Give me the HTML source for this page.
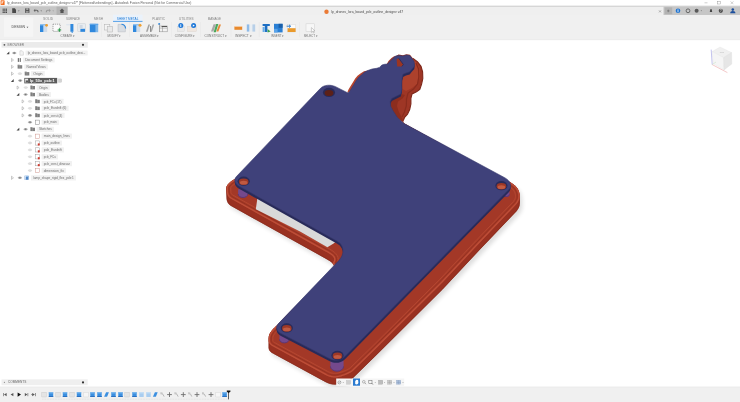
<!DOCTYPE html>
<html><head><meta charset="utf-8"><title>Fusion</title>
<style>
html,body{margin:0;padding:0;background:#fff;overflow:hidden}
body{width:740px;height:402px;font-family:"Liberation Sans",sans-serif}
svg{display:block;position:absolute;left:0;top:0}
#ui{filter:blur(0.3px)}
#model{filter:blur(0.35px)}
text{font-family:"Liberation Sans",sans-serif}
</style></head><body>
<svg width="740" height="402" viewBox="0 0 740 402">

<rect x="0" y="0" width="740" height="402" fill="#ffffff"/>
<rect x="0" y="5.8" width="740" height="9.2" fill="#efefef"/>
<rect x="0" y="5.7" width="740" height="1.1" fill="#d0d0d0"/>
<rect x="0" y="6.6" width="67.5" height="8.4" fill="#c6c6c6"/>
<rect x="56.5" y="6.6" width="11" height="8.4" fill="#b4b4b4"/>
<rect x="663.5" y="6.6" width="76.5" height="8.4" fill="#c6c6c6"/>
<rect x="664.6" y="7.4" width="7.6" height="6.8" fill="#b2b2b2"/>
<rect x="0" y="15" width="740" height="24.8" fill="#f0f0f0"/>
<rect x="0" y="39.6" width="740" height="0.5" fill="#e2e2e2"/>
<rect x="0" y="387" width="740" height="15" fill="#f0f0f0"/>
<rect x="0" y="386.7" width="740" height="0.5" fill="#e0e0e0"/>
<defs><clipPath id="cv"><rect x="0" y="40" width="740" height="346.8"/></clipPath></defs><g clip-path="url(#cv)">
<g id="model">
<path d="M236,178.5 C230,181.5 226.2,185 226.2,189 L226.7,199 C227,202 228.2,203.8 230.5,205.6 L325,258.2 C334,263.2 337,265.5 331,272 L290,312 L277,325.5 C271.5,330 268.7,334 268.7,338.5 L268.7,348 C269,350.8 270.5,352.2 273.2,353.6 L325.5,382.0 C330,384.5 334.5,385.2 340,383.8 C345,382.3 349.5,380.8 353.2,377.8 L375,356.5 L442.5,289.5 L479.5,250 L516.5,211.2 C518.6,208.5 519.6,206.5 519.8,203 L519.8,198.6 C519.9,193 518.7,189.6 515.5,186 L511.4,182.9 L404.2,123.6 L330,100 Z" fill="#000" opacity="0.13" transform="translate(2.5,3.5)" style="filter:blur(2.2px)"/>
<path d="M236,178.5 C230,181.5 226.2,185 226.2,189 L226.7,199 C227,202 228.2,203.8 230.5,205.6 L325,258.2 C334,263.2 337,265.5 331,272 L290,312 L277,325.5 C271.5,330 268.7,334 268.7,338.5 L268.7,348 C269,350.8 270.5,352.2 273.2,353.6 L325.5,382.0 C330,384.5 334.5,385.2 340,383.8 C345,382.3 349.5,380.8 353.2,377.8 L375,356.5 L442.5,289.5 L479.5,250 L516.5,211.2 C518.6,208.5 519.6,206.5 519.8,203 L519.8,198.6 C519.9,193 518.7,189.6 515.5,186 L511.4,182.9 L404.2,123.6 L330,100 Z" fill="#993121"/>
<path d="M236.2,178.7 L236.2,178.7 L236.1,178.8 L234.7,179.5 L233.3,180.3 L232.1,181.1 L231.0,181.9 L230.0,182.7 L229.1,183.6 L228.3,184.4 L227.7,185.3 L227.2,186.2 L226.8,187.1 L226.6,188.1 L226.5,189.0 L227.0,199.0 L227.1,199.7 L227.2,200.3 L227.4,201.0 L227.6,201.5 L227.8,202.1 L228.1,202.6 L228.4,203.1 L228.8,203.6 L229.2,204.0 L229.6,204.5 L230.1,204.9 L230.7,205.4 L325.1,257.9 L325.1,257.9 L327.3,259.1 L327.3,259.1 L329.1,260.2 L329.2,260.3 L330.7,261.3 L330.8,261.3 L332.1,262.3 L332.1,262.3 L333.1,263.3 L333.1,263.3 L333.2,263.4 L333.9,264.4 L333.9,264.4 L333.9,264.4 L333.9,264.4 L334.3,265.5 L334.3,265.5 L334.3,265.5 L334.3,265.5 L334.4,266.6 L334.4,266.7 L334.4,266.7 L334.4,266.7 L334.2,267.9 L334.1,267.9 L334.1,267.9 L333.5,269.2 L333.5,269.2 L333.5,269.2 L332.6,270.6 L332.5,270.7 L331.2,272.2 L331.2,272.2 L290.2,312.2 L277.2,325.7 L277.2,325.7 L275.9,326.8 L274.7,327.9 L273.6,329.0 L272.6,330.1 L271.8,331.1 L271.0,332.2 L270.4,333.2 L269.9,334.2 L269.5,335.3 L269.2,336.3 L269.1,337.4 L269.0,338.5 L269.0,348.0 L269.1,348.6 L269.2,349.2 L269.4,349.7 L269.7,350.2 L269.9,350.7 L270.3,351.1 L270.7,351.5 L271.1,351.9 L271.6,352.3 L272.1,352.6 L272.7,353.0 L273.3,353.3 L273.3,353.3 L325.6,381.7 L326.8,382.3 L327.9,382.8 L329.0,383.2 L330.1,383.6 L331.3,383.9 L332.4,384.1 L333.6,384.2 L334.8,384.2 L336.0,384.2 L337.3,384.0 L338.6,383.8 L339.9,383.5 L341.2,383.1 L342.4,382.8 L343.6,382.4 L344.7,382.0 L345.9,381.5 L347.0,381.1 L348.1,380.6 L349.1,380.1 L350.1,379.5 L351.1,378.9 L352.1,378.3 L353.0,377.6 L374.8,356.3 L442.3,289.3 L479.3,249.8 L479.3,249.8 L516.3,211.0 L516.8,210.4 L517.2,209.7 L517.6,209.1 L518.0,208.5 L518.3,207.9 L518.6,207.3 L518.8,206.7 L519.0,206.0 L519.2,205.3 L519.3,204.6 L519.4,203.8 L519.5,203.0 L519.5,198.6 L519.5,197.3 L519.4,196.0 L519.3,194.8 L519.1,193.7 L518.9,192.6 L518.6,191.6 L518.2,190.7 L517.8,189.8 L517.3,188.9 L516.7,188.0 L516.0,187.1 L515.3,186.2 L511.2,183.2 L404.1,123.9 L330.1,100.3 L236.2,178.7 Z" fill="none" stroke="#86291b" stroke-width="0.7"/>
<path d="M234.5,179.3 L233.2,180.0 L231.9,180.8 L230.8,181.7 L229.8,182.5 L228.8,183.4 L228.1,184.3 L227.4,185.2 L226.9,186.1 L226.5,187.0 L226.5,187.2 L226.7,192.0 L226.8,192.7 L226.9,193.4 L227.1,194.0 L227.3,194.6 L227.6,195.2 L227.8,195.8 L228.2,196.3 L228.6,196.8 L229.0,197.2 L229.4,197.7 L229.9,198.1 L230.5,198.6 L325.0,251.2 L327.1,252.4 L329.0,253.5 L330.6,254.6 L331.9,255.6 L332.9,256.5 L333.6,257.5 L334.0,258.6 L334.1,259.6 L333.9,260.8 L333.3,262.1 L332.5,263.2 L332.9,263.5 L333.6,264.5 L334.0,265.6 L334.1,266.6 L333.9,267.8 L333.3,269.1 L332.3,270.5 L331.0,272.0 L290.0,312.0 L277.0,325.5 L275.7,326.6 L274.5,327.7 L273.4,328.8 L272.4,329.9 L271.5,330.9 L270.8,332.0 L270.2,333.1 L269.6,334.1 L269.2,335.2 L268.9,336.3 L268.8,337.4 L268.7,338.5 L268.7,341.0 L268.8,341.7 L269.0,342.3 L269.2,342.9 L269.4,343.4 L269.7,343.9 L270.1,344.3 L270.5,344.7 L270.9,345.1 L271.4,345.5 L272.0,345.9 L272.6,346.2 L273.2,346.6 L325.5,375.0 L326.6,375.6 L327.8,376.1 L328.9,376.5 L330.0,376.9 L331.2,377.2 L332.4,377.4 L333.6,377.5 L334.8,377.5 L336.0,377.5 L337.3,377.3 L338.6,377.1 L340.0,376.8 L341.2,376.4 L342.5,376.0 L343.7,375.7 L344.8,375.2 L346.0,374.8 L347.1,374.4 L348.2,373.9 L349.2,373.4 L350.3,372.8 L351.3,372.2 L352.3,371.5 L353.2,370.8 L375.0,349.5 L442.5,282.5 L479.5,243.0 L516.5,204.2 L517.0,203.5 L517.5,202.9 L517.9,202.3 L518.2,201.7 L518.6,201.0 L518.9,200.4 L519.1,199.8 L519.3,199.1 L519.5,198.4 L519.6,197.6 L519.7,196.8 L519.8,196.5 L519.7,196.0 L519.6,194.8 L519.4,193.6 L519.2,192.6 L518.9,191.6 L518.5,190.6 L518.1,189.6 L517.5,188.7 L516.9,187.8 L516.3,186.9 L515.5,186.0 L511.4,182.9 L404.2,123.6 L330.0,100.0 L236.0,178.5 L234.5,179.3 Z" fill="#a83b28"/>
<path d="M234.9,179.9 L233.6,180.6 L232.3,181.4 L231.2,182.2 L230.2,183.0 L229.4,183.9 L228.6,184.7 L228.0,185.5 L227.5,186.4 L227.2,187.3 L227.2,187.3 L227.4,191.9 L227.5,192.6 L227.6,193.2 L227.8,193.8 L228.0,194.4 L228.2,194.9 L228.5,195.4 L228.8,195.9 L229.1,196.3 L229.5,196.8 L229.9,197.2 L230.4,197.6 L230.9,198.0 L325.3,250.6 L325.3,250.6 L327.5,251.8 L327.5,251.8 L329.3,252.9 L329.4,252.9 L331.0,254.0 L331.0,254.0 L332.3,255.0 L332.4,255.1 L333.4,256.0 L333.4,256.1 L333.5,256.1 L334.2,257.1 L334.2,257.2 L334.3,257.2 L334.3,257.3 L334.7,258.3 L334.7,258.4 L334.7,258.4 L334.7,258.5 L334.8,259.6 L334.8,259.7 L334.8,259.7 L334.8,259.8 L334.5,261.0 L334.5,261.0 L334.5,261.1 L333.9,262.4 L333.9,262.4 L333.8,262.5 L333.4,263.1 L333.4,263.1 L333.5,263.1 L334.2,264.1 L334.2,264.2 L334.3,264.2 L334.3,264.3 L334.7,265.3 L334.7,265.4 L334.7,265.4 L334.7,265.5 L334.8,266.6 L334.8,266.7 L334.8,266.7 L334.8,266.8 L334.5,268.0 L334.5,268.0 L334.5,268.1 L333.9,269.4 L333.9,269.4 L333.8,269.5 L332.9,270.9 L332.8,270.9 L331.5,272.5 L331.5,272.5 L290.5,312.5 L277.5,326.0 L277.5,326.0 L276.1,327.1 L275.0,328.2 L273.9,329.3 L272.9,330.3 L272.1,331.4 L271.4,332.4 L270.8,333.4 L270.3,334.4 L269.9,335.4 L269.6,336.4 L269.5,337.5 L269.4,338.5 L269.4,340.9 L269.5,341.5 L269.6,342.1 L269.8,342.6 L270.0,343.1 L270.3,343.5 L270.6,343.9 L270.9,344.2 L271.3,344.6 L271.8,345.0 L272.3,345.3 L272.9,345.6 L273.5,346.0 L273.5,346.0 L325.8,374.4 L326.9,375.0 L328.0,375.5 L329.1,375.9 L330.2,376.2 L331.3,376.5 L332.5,376.7 L333.6,376.8 L334.8,376.8 L336.0,376.8 L337.2,376.6 L338.5,376.4 L339.8,376.1 L341.0,375.8 L342.2,375.4 L343.4,375.0 L344.6,374.6 L345.7,374.2 L346.8,373.7 L347.9,373.2 L348.9,372.7 L349.9,372.2 L350.9,371.6 L351.8,371.0 L352.7,370.3 L374.5,349.0 L442.0,282.0 L479.0,242.5 L479.0,242.5 L516.0,203.7 L516.4,203.1 L516.9,202.5 L517.3,201.9 L517.6,201.3 L517.9,200.7 L518.2,200.1 L518.5,199.5 L518.6,198.9 L518.8,198.2 L518.9,197.5 L519.0,196.8 L519.1,196.5 L519.0,196.0 L518.9,194.9 L518.8,193.8 L518.5,192.8 L518.2,191.8 L517.9,190.8 L517.4,189.9 L516.9,189.1 L516.4,188.2 L515.7,187.3 L515.0,186.5 L511.0,183.5 L403.9,124.2 L330.2,100.8 L236.4,179.0 L236.4,179.1 L236.3,179.1 L234.9,179.9 Z" fill="none" stroke="#bd4e38" stroke-width="1.3"/>
<path d="M229.0,187.6 L229.2,191.8 L229.3,192.3 L229.4,192.8 L229.5,193.3 L229.6,193.7 L229.8,194.1 L230.0,194.5 L230.2,194.8 L230.5,195.2 L230.8,195.5 L231.2,195.9 L231.6,196.2 L231.9,196.5 L326.2,249.0 L326.2,249.0 L328.4,250.2 L328.4,250.2 L330.3,251.4 L330.4,251.4 L331.9,252.5 L332.1,252.6 L333.4,253.6 L333.6,253.8 L334.6,254.7 L334.8,254.9 L334.9,255.1 L335.7,256.1 L335.8,256.2 L335.9,256.4 L336.0,256.6 L336.4,257.6 L336.4,257.9 L336.5,258.1 L336.5,258.4 L336.6,259.5 L336.6,259.7 L336.6,259.9 L336.6,260.2 L336.3,261.3 L336.2,261.6 L336.1,261.9 L335.6,263.0 L335.7,263.1 L335.8,263.2 L335.9,263.4 L336.0,263.6 L336.4,264.6 L336.4,264.9 L336.5,265.1 L336.5,265.4 L336.6,266.5 L336.6,266.7 L336.6,266.9 L336.6,267.2 L336.3,268.3 L336.2,268.6 L336.1,268.9 L335.5,270.1 L335.4,270.3 L335.3,270.5 L334.4,271.9 L334.2,272.1 L332.9,273.6 L332.7,273.8 L291.8,313.8 L278.8,327.2 L278.6,327.4 L277.3,328.5 L276.2,329.5 L275.2,330.5 L274.3,331.5 L273.5,332.4 L272.9,333.4 L272.4,334.3 L271.9,335.1 L271.6,336.0 L271.4,336.8 L271.2,337.6 L271.2,338.6 L271.2,340.8 L271.3,341.2 L271.4,341.6 L271.5,341.9 L271.6,342.2 L271.8,342.4 L272.0,342.7 L272.2,343.0 L272.5,343.2 L272.8,343.5 L273.3,343.8 L273.8,344.1 L274.4,344.4 L274.4,344.4 L326.7,372.8 L327.7,373.3 L328.7,373.8 L329.7,374.2 L330.7,374.5 L331.7,374.7 L332.7,374.9 L333.7,375.0 L334.8,375.0 L335.9,375.0 L337.0,374.8 L338.2,374.7 L339.4,374.4 L340.5,374.0 L341.7,373.7 L342.9,373.3 L344.0,372.9 L345.1,372.5 L346.1,372.1 L347.1,371.6 L348.1,371.1 L349.0,370.6 L349.9,370.1 L350.8,369.5 L351.6,368.9 L373.2,347.7 L440.7,280.8 L477.7,241.3 L477.7,241.3 L514.6,202.6 L515.0,202.1 L515.4,201.5 L515.8,200.9 L516.1,200.4 L516.3,199.9 L516.6,199.4 L516.8,198.9 L516.9,198.4 L517.0,197.9 L517.2,197.2 L517.2,196.6 L517.3,196.4 L517.2,196.2 L517.1,195.1 L517.0,194.1 L516.8,193.2 L516.5,192.4 L516.2,191.6 L515.8,190.8 L515.4,190.0 L514.9,189.2 L514.3,188.5 L513.8,187.8 L510.0,185.0 L403.2,125.9 L330.5,102.8 L237.6,180.4 L237.4,180.6 L237.2,180.7 L235.8,181.5 L234.5,182.2 L233.3,182.9 L232.3,183.7 L231.4,184.4 L230.6,185.1 L230.0,185.8 L229.5,186.5 L229.1,187.2 L229.0,187.6 Z" fill="none" stroke="#8f2f1f" stroke-width="0.8"/>
<path d="M230.7,187.9 L230.9,191.6 L230.9,192.1 L231.0,192.5 L231.1,192.8 L231.2,193.1 L231.3,193.4 L231.5,193.6 L231.6,193.8 L231.8,194.1 L232.0,194.4 L232.3,194.6 L232.7,195.0 L232.9,195.1 L327.0,247.5 L327.1,247.5 L329.2,248.7 L329.3,248.8 L331.1,249.9 L331.3,250.0 L332.9,251.0 L333.1,251.2 L334.4,252.2 L334.8,252.5 L335.8,253.5 L336.1,253.8 L336.3,254.1 L337.0,255.1 L337.2,255.4 L337.4,255.7 L337.5,256.0 L337.9,257.0 L338.1,257.4 L338.2,257.8 L338.2,258.2 L338.3,259.3 L338.3,259.7 L338.3,260.1 L338.2,260.5 L338.0,261.7 L337.8,262.2 L337.7,262.6 L337.5,262.9 L337.5,263.0 L337.9,264.0 L338.1,264.4 L338.2,264.8 L338.2,265.2 L338.3,266.3 L338.3,266.7 L338.3,267.1 L338.2,267.5 L338.0,268.7 L337.8,269.2 L337.7,269.6 L337.1,270.9 L336.9,271.2 L336.7,271.4 L335.8,272.8 L335.5,273.2 L334.2,274.7 L333.9,275.0 L293.0,315.0 L280.0,328.4 L279.7,328.7 L278.5,329.8 L277.4,330.8 L276.4,331.7 L275.6,332.6 L274.9,333.5 L274.3,334.3 L273.8,335.1 L273.5,335.8 L273.2,336.5 L273.0,337.2 L272.9,337.8 L272.9,338.6 L272.9,340.7 L272.9,340.9 L273.0,341.1 L273.0,341.3 L273.1,341.4 L273.2,341.5 L273.2,341.6 L273.4,341.7 L273.6,341.9 L273.8,342.1 L274.2,342.3 L274.6,342.6 L275.2,342.9 L275.2,342.9 L327.5,371.3 L328.5,371.8 L329.4,372.2 L330.3,372.6 L331.1,372.8 L332.0,373.0 L332.9,373.2 L333.8,373.3 L334.8,373.3 L335.7,373.3 L336.8,373.2 L337.8,373.0 L338.9,372.7 L340.0,372.4 L341.2,372.0 L342.3,371.7 L343.4,371.3 L344.4,370.9 L345.4,370.5 L346.4,370.1 L347.3,369.6 L348.2,369.2 L349.0,368.6 L349.8,368.1 L350.4,367.6 L372.1,346.5 L439.5,279.6 L476.4,240.1 L476.5,240.1 L513.3,201.5 L513.6,201.0 L514.0,200.5 L514.3,200.0 L514.6,199.6 L514.8,199.2 L515.0,198.8 L515.1,198.4 L515.3,198.0 L515.4,197.5 L515.5,197.0 L515.6,196.4 L515.6,196.4 L515.5,196.3 L515.5,195.3 L515.3,194.4 L515.1,193.6 L514.9,192.9 L514.6,192.2 L514.3,191.6 L514.0,190.9 L513.5,190.2 L513.0,189.5 L512.6,189.1 L509.1,186.4 L402.5,127.5 L330.9,104.7 L238.7,181.7 L238.3,182.0 L237.9,182.2 L236.6,182.9 L235.4,183.6 L234.3,184.3 L233.4,185.0 L232.5,185.7 L231.9,186.3 L231.3,186.9 L231.0,187.4 L230.7,187.9 Z" fill="#a33827" stroke="#b64832" stroke-width="0.9"/>
<path d="M395.0,56.5 L398.6,54.6 L403.0,55.2 L406.4,54.2 L410.0,54.8 L413.0,58.4 L417.6,61.8 L421.0,66.3 L422.6,71.8 L422.8,78.5 L421.6,84.1 L419.8,89.5 L416.5,91.7 L412.0,94.0 L410.9,98.4 L410.9,104.0 L409.7,109.6 L407.5,114.1 L404.6,117.4 L403.2,120.8 L404.2,123.6 L395.0,116.0 L389.0,104.0 L398.0,93.0 L400.0,80.0 L408.0,70.0 Z" fill="#9e3625"/>
<path d="M413.0,59.5 L416.5,62.5 L419.0,67.0 L420.0,72.0 L419.6,78.0 L417.0,84.0 L412.0,88.0 L406.0,91.0 L402.5,89.0 L402.5,80.0 L404.6,73.3 L410.2,70.5 L414.0,66.0 Z" fill="#ad412c"/>
<path d="M416.0,63.0 L418.5,69.0 L418.8,77.0 L417.5,84.0 L413.5,89.0 L408.0,93.0 L406.5,99.0 L406.3,106.0 L404.5,112.0 L402.0,117.0" fill="none" stroke="#8a2c1d" stroke-width="1.2"/>
<path d="M413.0,58.4 L417.6,61.8 L421.0,66.3 L422.6,71.8 L422.8,78.5 L421.6,84.1 L419.8,89.5 L416.5,91.7 L412.0,94.0 L410.9,98.4 L410.9,104.0 L409.7,109.6 L407.5,114.1 L404.6,117.4 L403.2,120.8" fill="none" stroke="#7e2719" stroke-width="1.1"/>
<path d="M400.8,94.0 L396.3,96.2 L391.8,98.4 L390.2,101.8 L390.7,106.3 L393.0,110.7 L395.2,114.1 L397.4,117.4 L400.8,120.8 L403.2,120.8 L401.0,116.0 L398.5,111.0 L397.0,106.0 L398.0,101.5 L402.5,98.5 L405.0,95.0 Z" fill="#8c2d1e"/>
<path d="M347.2,92.8 L348.5,89.5 L350.6,86.0 L352.8,82.4 L355.2,78.6 L357.5,75.8 L360.8,73.2 L364.0,71.2 L368.0,70.4 L366.0,74.0 L360.0,80.0 L354.0,90.0 Z" fill="#b8452e"/>
<path d="M386.5,64.5 L388.5,61.0 L391.5,58.0 L394.5,56.0 L396.0,58.0 L392.0,63.0 L389.0,66.0 Z" fill="#a53a27"/>
<path d="M257.5,197.5 L336,241.5 L333.6,243.6 L327.4,247.2 L300,231.6 L255.8,209.2 Z" fill="#d9d9d9"/>
<path d="M238.1,189.2 L238.1,194.2 A4.9,3.5 0 0 0 247.9,194.2 L247.9,189.2 Z" fill="#74498c"/>
<path d="M238.1,194.0 A4.9,3.5 0 0 0 247.9,194.0" fill="none" stroke="#5b3470" stroke-width="0.9"/>
<path d="M279.5,334.6 L279.5,339.6 A4.8,3.5 0 0 0 289.1,339.6 L289.1,334.6 Z" fill="#74498c"/>
<path d="M279.5,339.4 A4.8,3.5 0 0 0 289.1,339.4" fill="none" stroke="#5b3470" stroke-width="0.9"/>
<path d="M330.4,360.6 L330.4,366.6 A6.6,4.8 0 0 0 343.6,366.6 L343.6,360.6 Z" fill="#74498c"/>
<path d="M330.4,366.4 A6.6,4.8 0 0 0 343.6,366.4" fill="none" stroke="#5b3470" stroke-width="0.9"/>
<path d="M503.1,191.5 L503.1,194.5 A3.2,2.3 0 0 0 509.5,194.5 L509.5,191.5 Z" fill="#74498c"/>
<path d="M503.1,194.3 A3.2,2.3 0 0 0 509.5,194.3" fill="none" stroke="#5b3470" stroke-width="0.9"/>
<path d="M278.9,131.9 L320.5,88.3 C323.8,84.8 330.8,84.2 336.0,86.9 L348.0,93.0 L349.7,91.3 L352.0,87.4 L354.2,84.0 L356.5,80.1 L358.7,77.3 L362.0,74.5 L364.3,72.3 L367.6,70.6 L372.1,69.0 L376.6,68.3 L379.5,67.4 L381.8,65.1 L384.5,64.3 L387.4,64.0 L389.6,61.8 L393.0,58.4 L395.2,56.2 L398.6,55.4 L403.0,56.0 L406.4,55.0 L409.7,55.6 L412.0,58.4 L414.2,61.8 L414.4,66.3 L412.0,69.0 L409.7,71.8 L406.0,73.0 L403.0,74.3 L402.0,78.5 L401.7,85.0 L401.9,89.5 L400.8,94.0 L396.3,96.2 L391.8,98.4 L390.2,101.8 L390.7,106.3 L393.0,110.7 L395.2,114.1 L397.4,117.4 L400.8,120.8 L404.2,123.6 L504.7,177.7 C510.4,180.7 512.2,186.0 508.8,189.6 L344.7,356.8 C341.3,360.4 334.8,361.3 330.2,358.9 L281.0,333.5 C276.6,331.2 275.3,327.0 278.0,324.1 L338.6,260.8 C345.0,254.0 344.4,245.2 337.2,241.2 L239.1,186.2 C234.8,183.8 233.6,179.6 236.2,176.8 Z" fill="#292b5a" transform="translate(0,2.6)"/>
<path d="M278.9,131.9 L320.5,88.3 C323.8,84.8 330.8,84.2 336.0,86.9 L348.0,93.0 L349.7,91.3 L352.0,87.4 L354.2,84.0 L356.5,80.1 L358.7,77.3 L362.0,74.5 L364.3,72.3 L367.6,70.6 L372.1,69.0 L376.6,68.3 L379.5,67.4 L381.8,65.1 L384.5,64.3 L387.4,64.0 L389.6,61.8 L393.0,58.4 L395.2,56.2 L398.6,55.4 L403.0,56.0 L406.4,55.0 L409.7,55.6 L412.0,58.4 L414.2,61.8 L414.4,66.3 L412.0,69.0 L409.7,71.8 L406.0,73.0 L403.0,74.3 L402.0,78.5 L401.7,85.0 L401.9,89.5 L400.8,94.0 L396.3,96.2 L391.8,98.4 L390.2,101.8 L390.7,106.3 L393.0,110.7 L395.2,114.1 L397.4,117.4 L400.8,120.8 L404.2,123.6 L504.7,177.7 C510.4,180.7 512.2,186.0 508.8,189.6 L344.7,356.8 C341.3,360.4 334.8,361.3 330.2,358.9 L281.0,333.5 C276.6,331.2 275.3,327.0 278.0,324.1 L338.6,260.8 C345.0,254.0 344.4,245.2 337.2,241.2 L239.1,186.2 C234.8,183.8 233.6,179.6 236.2,176.8 Z" fill="#292b5a" transform="translate(0,1.3)"/>
<path d="M278.9,131.9 L320.5,88.3 C323.8,84.8 330.8,84.2 336.0,86.9 L348.0,93.0 L349.7,91.3 L352.0,87.4 L354.2,84.0 L356.5,80.1 L358.7,77.3 L362.0,74.5 L364.3,72.3 L367.6,70.6 L372.1,69.0 L376.6,68.3 L379.5,67.4 L381.8,65.1 L384.5,64.3 L387.4,64.0 L389.6,61.8 L393.0,58.4 L395.2,56.2 L398.6,55.4 L403.0,56.0 L406.4,55.0 L409.7,55.6 L412.0,58.4 L414.2,61.8 L414.4,66.3 L412.0,69.0 L409.7,71.8 L406.0,73.0 L403.0,74.3 L402.0,78.5 L401.7,85.0 L401.9,89.5 L400.8,94.0 L396.3,96.2 L391.8,98.4 L390.2,101.8 L390.7,106.3 L393.0,110.7 L395.2,114.1 L397.4,117.4 L400.8,120.8 L404.2,123.6 L504.7,177.7 C510.4,180.7 512.2,186.0 508.8,189.6 L344.7,356.8 C341.3,360.4 334.8,361.3 330.2,358.9 L281.0,333.5 C276.6,331.2 275.3,327.0 278.0,324.1 L338.6,260.8 C345.0,254.0 344.4,245.2 337.2,241.2 L239.1,186.2 C234.8,183.8 233.6,179.6 236.2,176.8 Z" fill="#3f417a" stroke="#35376c" stroke-width="0.6"/>
<path d="M396.6,59.0 L398.8,58.2 L403.4,64.6 L401.8,66.4 L397.2,66.6 Z" fill="#9a3522"/>
<path d="M398.8,58.2 L403.4,64.6 L401.8,66.4" fill="none" stroke="#2b2d5e" stroke-width="0.9"/>
<ellipse cx="329.0" cy="92.4" rx="6.1" ry="4.6" fill="#292b5a"/>
<ellipse cx="329.0" cy="93.0" rx="4.4" ry="3.1" fill="#5c2018"/>
<ellipse cx="243.7" cy="181.2" rx="6.1" ry="4.6" fill="#292b5a"/>
<ellipse cx="243.7" cy="181.7" rx="4.8" ry="3.3" fill="#9e3826"/>
<ellipse cx="243.7" cy="182.7" rx="3.8" ry="1.9" fill="#c05a42"/>
<ellipse cx="501.4" cy="185.7" rx="6.1" ry="4.6" fill="#292b5a"/>
<ellipse cx="501.4" cy="186.2" rx="4.8" ry="3.3" fill="#9e3826"/>
<ellipse cx="501.4" cy="187.2" rx="3.8" ry="1.9" fill="#c05a42"/>
<ellipse cx="337.5" cy="355.4" rx="6.1" ry="4.6" fill="#292b5a"/>
<ellipse cx="337.5" cy="355.9" rx="4.8" ry="3.3" fill="#9e3826"/>
<ellipse cx="337.5" cy="356.9" rx="3.8" ry="1.9" fill="#c05a42"/>
<ellipse cx="286.8" cy="327.9" rx="6.1" ry="4.6" fill="#292b5a"/>
<ellipse cx="286.8" cy="328.4" rx="4.8" ry="3.3" fill="#9e3826"/>
<ellipse cx="286.8" cy="329.4" rx="3.8" ry="1.9" fill="#c05a42"/>
</g>
</g>
<g id="ui">
<rect x="0.60" y="0.30" width="4.00" height="4.80" fill="#f26a1b" rx="0.6"/>
<path d="M1.9,4.2 V1.3 H3.6 M1.9,2.7 H3.2" stroke="#fff" stroke-width="0.7" fill="none"/>
<text x="7.0" y="4.1" font-size="3.10" fill="#626262" text-anchor="start" font-weight="normal" textLength="184.4" lengthAdjust="spacingAndGlyphs" >lp_drones_lora_board_pcb_outline_designv v47* [Flattened/unbendings] - Autodesk Fusion Personal (Not for Commercial Use)</text>
<path d="M704.5,2.8 H707.5" stroke="#8a8a8a" stroke-width="0.4"/>
<rect x="717.6" y="1.4" width="2.8" height="2.6" fill="none" stroke="#8a8a8a" stroke-width="0.4"/>
<path d="M730.6,1.4 L733.4,4.2 M733.4,1.4 L730.6,4.2" stroke="#8a8a8a" stroke-width="0.4"/>
<rect x="2.60" y="8.60" width="1.20" height="1.20" fill="#4a4a4a" />
<rect x="2.60" y="10.20" width="1.20" height="1.20" fill="#4a4a4a" />
<rect x="2.60" y="11.80" width="1.20" height="1.20" fill="#4a4a4a" />
<rect x="4.20" y="8.60" width="1.20" height="1.20" fill="#4a4a4a" />
<rect x="4.20" y="10.20" width="1.20" height="1.20" fill="#4a4a4a" />
<rect x="4.20" y="11.80" width="1.20" height="1.20" fill="#4a4a4a" />
<rect x="5.80" y="8.60" width="1.20" height="1.20" fill="#4a4a4a" />
<rect x="5.80" y="10.20" width="1.20" height="1.20" fill="#4a4a4a" />
<rect x="5.80" y="11.80" width="1.20" height="1.20" fill="#4a4a4a" />
<path d="M12.2,8.2 H14.8 L16,9.4 V13 H12.2 Z" fill="#4a4a4a"/>
<path d="M18,10.4 L19.6,10.4 L18.8,11.4 Z" fill="#666"/>
<rect x="25.20" y="8.30" width="4.20" height="4.60" fill="#4a4a4a" rx="0.4"/>
<rect x="26.20" y="8.30" width="2.20" height="1.50" fill="#bbb" />
<rect x="26.00" y="10.80" width="2.60" height="2.10" fill="#999" />
<path d="M38.6,12.2 C38.8,9.6 36.6,9.2 35.2,10 L35.2,8.8 L33.6,10.6 L35.2,12.2 L35.2,11 C36.4,10.4 37.6,10.6 37.4,12.2 Z" fill="#666"/>
<path d="M40.4,10.4 L42,10.4 L41.2,11.4 Z" fill="#666"/>
<path d="M45.8,12.2 C45.6,9.6 47.8,9.2 49.2,10 L49.2,8.8 L50.8,10.6 L49.2,12.2 L49.2,11 C48,10.4 46.8,10.6 47,12.2 Z" fill="#9a9a9a"/>
<path d="M52.4,10.4 L54,10.4 L53.2,11.4 Z" fill="#9a9a9a"/>
<path d="M59.6,10.8 L62,8.4 L64.4,10.8 L63.6,10.8 L63.6,13 L60.4,13 L60.4,10.8 Z" fill="#555"/>
<circle cx="326.5" cy="11.7" r="2.2" fill="#ea7a35"/>
<text x="331.2" y="12.9" font-size="3.30" fill="#4a4a4a" text-anchor="start" font-weight="normal" textLength="72.0" lengthAdjust="spacingAndGlyphs" >lp_drones_lora_board_pcb_outline_designv v47</text>
<path d="M659,10.4 L661,12.4 M661,10.4 L659,12.4" stroke="#555" stroke-width="0.4"/>
<path d="M667,10.9 H669.6 M668.3,9.6 V12.2" stroke="#555" stroke-width="0.45"/>
<circle cx="678" cy="10.8" r="2.3" fill="#1f74d1"/><rect x="677.6" y="9.4" width="0.8" height="2.8" fill="#fff"/>
<circle cx="688" cy="10.8" r="1.9" fill="none" stroke="#444" stroke-width="0.7"/>
<circle cx="696.6" cy="10.8" r="2" fill="#5a5a5a"/><path d="M700.6,10.4 L702,10.4 L701.3,11.3 Z" fill="#555"/>
<path d="M709.8,12 L710.2,9.6 Q711,8.6 711.8,9.6 L712.2,12 Z" fill="#444"/>
<circle cx="720.8" cy="10.8" r="2.1" fill="#4c4c4c"/><text x="720.8" y="11.8" font-size="2.80" fill="#ddd" text-anchor="middle" font-weight="bold" >?</text>
<circle cx="732.8" cy="9.6" r="1.3" fill="#1d4f9c"/><path d="M730.2,13.2 Q730.2,10.9 732.8,10.9 Q735.4,10.9 735.4,13.2 Z" fill="#1d4f9c"/>
<rect x="113.00" y="14.70" width="29.50" height="6.20" fill="#eaf2fb" />
<text x="43.0" y="19.7" font-size="3.00" fill="#858585" text-anchor="start" font-weight="normal" textLength="10.2" lengthAdjust="spacingAndGlyphs" >SOLID</text>
<text x="66.0" y="19.7" font-size="3.00" fill="#858585" text-anchor="start" font-weight="normal" textLength="14.0" lengthAdjust="spacingAndGlyphs" >SURFACE</text>
<text x="94.0" y="19.7" font-size="3.00" fill="#858585" text-anchor="start" font-weight="normal" textLength="9.0" lengthAdjust="spacingAndGlyphs" >MESH</text>
<text x="152.2" y="19.7" font-size="3.00" fill="#858585" text-anchor="start" font-weight="normal" textLength="12.8" lengthAdjust="spacingAndGlyphs" >PLASTIC</text>
<text x="179.0" y="19.7" font-size="3.00" fill="#858585" text-anchor="start" font-weight="normal" textLength="14.6" lengthAdjust="spacingAndGlyphs" >UTILITIES</text>
<text x="207.8" y="19.7" font-size="3.00" fill="#858585" text-anchor="start" font-weight="normal" textLength="13.2" lengthAdjust="spacingAndGlyphs" >MANAGE</text>
<text x="116.8" y="19.7" font-size="3.00" fill="#1a78d6" text-anchor="start" font-weight="normal" textLength="21.6" lengthAdjust="spacingAndGlyphs" >SHEET METAL</text>
<rect x="113.00" y="20.90" width="29.50" height="0.80" fill="#2b8be6" />
<rect x="4.00" y="17.60" width="29.20" height="19.20" fill="#f5f5f5" rx="0.6"/>
<text x="11.6" y="28.4" font-size="3.10" fill="#444" text-anchor="start" font-weight="normal" textLength="13.6" lengthAdjust="spacingAndGlyphs" >DESIGN</text>
<path d="M26.6,26.8 L28.4,26.8 L27.5,27.9 Z" fill="#555"/>
<rect x="101.30" y="22.00" width="0.40" height="15.00" fill="#e2e2e2" />
<rect x="129.00" y="22.00" width="0.40" height="15.00" fill="#e2e2e2" />
<rect x="171.00" y="22.00" width="0.40" height="15.00" fill="#e2e2e2" />
<rect x="200.30" y="22.00" width="0.40" height="15.00" fill="#e2e2e2" />
<rect x="230.80" y="22.00" width="0.40" height="15.00" fill="#e2e2e2" />
<rect x="258.90" y="22.00" width="0.40" height="15.00" fill="#e2e2e2" />
<rect x="299.30" y="22.00" width="0.40" height="15.00" fill="#e2e2e2" />
<text x="60.5" y="36.9" font-size="2.90" fill="#6e6e6e" text-anchor="start" font-weight="normal" textLength="14.6" lengthAdjust="spacingAndGlyphs" >CREATE ▾</text>
<text x="107.4" y="36.9" font-size="2.90" fill="#6e6e6e" text-anchor="start" font-weight="normal" textLength="14.0" lengthAdjust="spacingAndGlyphs" >MODIFY ▾</text>
<text x="140.0" y="36.9" font-size="2.90" fill="#6e6e6e" text-anchor="start" font-weight="normal" textLength="19.5" lengthAdjust="spacingAndGlyphs" >ASSEMBLE ▾</text>
<text x="174.7" y="36.9" font-size="2.90" fill="#6e6e6e" text-anchor="start" font-weight="normal" textLength="20.7" lengthAdjust="spacingAndGlyphs" >CONFIGURE ▾</text>
<text x="204.4" y="36.9" font-size="2.90" fill="#6e6e6e" text-anchor="start" font-weight="normal" textLength="22.8" lengthAdjust="spacingAndGlyphs" >CONSTRUCT ▾</text>
<text x="235.0" y="36.9" font-size="2.90" fill="#6e6e6e" text-anchor="start" font-weight="normal" textLength="16.8" lengthAdjust="spacingAndGlyphs" >INSPECT ▾</text>
<text x="271.0" y="36.9" font-size="2.90" fill="#6e6e6e" text-anchor="start" font-weight="normal" textLength="13.4" lengthAdjust="spacingAndGlyphs" >INSERT ▾</text>
<text x="303.7" y="36.9" font-size="2.90" fill="#6e6e6e" text-anchor="start" font-weight="normal" textLength="14.0" lengthAdjust="spacingAndGlyphs" >SELECT ▾</text>
<rect x="40.00" y="24.00" width="3.60" height="8.00" fill="#2f88dd" />
<rect x="43.60" y="24.00" width="3.60" height="8.00" fill="#cfdcea" />
<rect x="40.00" y="24.00" width="7.20" height="1.40" fill="#8fc0ee" />
<circle cx="46.6" cy="25.3" r="1.4" fill="#f0a030"/>
<rect x="53.00" y="24.20" width="7.20" height="7.20" fill="#fafafa" stroke="#555" stroke-width="0.5" stroke-dasharray="1.2 0.8"/>
<path d="M57.6,30 H61.2 M59.4,28.2 V31.8" stroke="#2e9b4a" stroke-width="1.1"/>
<rect x="66.20" y="24.00" width="5.00" height="1.40" fill="#dfe6ee" />
<rect x="70.40" y="24.00" width="3.00" height="7.60" fill="#2f88dd" />
<path d="M70.4,31.6 L73.4,31.6 L72.4,33 Z" fill="#2f88dd"/>
<rect x="77.80" y="23.80" width="7.60" height="7.60" fill="#e9edf1" stroke="#c4cbd2" stroke-width="0.5"/>
<rect x="80.40" y="28.80" width="4.60" height="3.00" fill="#2f88dd" />
<rect x="79.60" y="25.00" width="3.00" height="3.40" fill="#cfd8e2" />
<rect x="89.80" y="23.80" width="6.00" height="8.40" fill="#2f88dd" />
<rect x="95.80" y="23.80" width="2.40" height="8.40" fill="#7db6ea" />
<rect x="89.80" y="23.80" width="8.40" height="1.20" fill="#5ea5e8" />
<rect x="104.60" y="24.40" width="5.20" height="5.60" fill="#f4f4f4" stroke="#b0b0b0" stroke-width="0.5"/>
<rect x="107.20" y="26.40" width="5.40" height="5.60" fill="#e9e9e9" stroke="#b0b0b0" stroke-width="0.5"/>
<path d="M118,31.8 V24.4 H121.4 A4,4 0 0 1 125.4,28.4 V31.8 Z" fill="#d9dde2" stroke="#a9aeb5" stroke-width="0.4"/>
<path d="M121.4,24.2 A4.2,4.2 0 0 1 125.6,28.4" fill="none" stroke="#2f88dd" stroke-width="1.1"/>
<rect x="133.00" y="24.00" width="3.60" height="8.00" fill="#2f88dd" />
<rect x="136.60" y="24.00" width="3.60" height="8.00" fill="#cfdcea" />
<rect x="133.00" y="24.00" width="7.20" height="1.40" fill="#8fc0ee" />
<circle cx="140" cy="25.3" r="1.5" fill="#f0a030"/>
<path d="M146,31.8 L148.4,24.6 L150,24.6 L147.6,31.8 Z" fill="#a2a2a2"/><path d="M150.2,31.8 L152.6,24.6 L154.2,24.6 L151.8,31.8 Z" fill="#a8a8a8"/>
<rect x="150.00" y="26.00" width="1.00" height="5.80" fill="#8c8c8c" />
<rect x="159.40" y="26.00" width="7.80" height="5.80" fill="#f2f2f2" stroke="#8d8d8d" stroke-width="0.5"/>
<rect x="159.40" y="27.80" width="7.80" height="0.50" fill="#8d8d8d" />
<rect x="162.00" y="26.00" width="0.50" height="5.80" fill="#8d8d8d" />
<rect x="161.60" y="26.00" width="5.40" height="1.00" fill="#555" />
<circle cx="159.2" cy="23.9" r="1" fill="#2f88dd"/>
<rect x="159.00" y="24.00" width="0.50" height="7.80" fill="#8d8d8d" />
<rect x="177.20" y="26.20" width="7.00" height="5.40" fill="#e9e9e9" stroke="#d0d0d0" stroke-width="0.4"/>
<rect x="187.40" y="26.20" width="9.00" height="5.40" fill="#efe6df" stroke="#d8d0c8" stroke-width="0.4"/>
<circle cx="180.8" cy="25.6" r="2.5" fill="#1f78d8"/><circle cx="193.6" cy="25.6" r="2.5" fill="#1f78d8"/>
<rect x="180.40" y="24.20" width="0.80" height="2.80" fill="#fff" />
<path d="M192.8,24.4 L194.8,25.6 L192.8,26.8 Z" fill="#fff"/>
<path d="M211,31.6 L213.6,24.2 L216,24.2 L213.4,31.6 Z" fill="#a8a8a8"/>
<path d="M213.6,32.2 L216.2,24.0 L218.4,24.0 L215.8,32.2 Z" fill="#49a85c"/>
<path d="M216.4,31.6 L219,24.4 L221,24.4 L218.4,31.6 Z" fill="#e88a3a"/>
<rect x="234.40" y="26.60" width="7.80" height="3.20" fill="#e8892c" />
<rect x="234.40" y="26.00" width="7.80" height="1.00" fill="#f4c9a0" />
<rect x="246.80" y="24.40" width="2.60" height="7.20" fill="#8fbbe8" />
<rect x="249.80" y="24.40" width="2.20" height="7.20" fill="#e9eef3" />
<rect x="252.40" y="24.40" width="2.80" height="7.20" fill="#b7cfe8" />
<rect x="262.60" y="24.00" width="7.20" height="2.00" fill="#1d6fc4" />
<rect x="264.80" y="24.00" width="2.60" height="8.00" fill="#1d6fc4" />
<path d="M267.6,29 L270.6,31.4 L267.6,32.6 Z" fill="#3aa04f"/>
<rect x="262.60" y="27.00" width="2.00" height="5.00" fill="#69aee8" />
<rect x="274.00" y="23.80" width="8.60" height="8.60" fill="#2a7fd4" />
<rect x="278.60" y="23.80" width="4.00" height="4.00" fill="#1a5fa8" />
<rect x="274.00" y="28.80" width="3.60" height="3.60" fill="#5aa4ea" />
<rect x="287.60" y="24.40" width="8.00" height="7.60" fill="#fbfbfb" stroke="#cfcfcf" stroke-width="0.4"/>
<rect x="287.60" y="28.20" width="8.00" height="3.80" fill="#ea9a2c" />
<path d="M286.6,26.2 H290.4 M289,24.8 L290.6,26.2 L289,27.6" stroke="#1d6fc4" stroke-width="0.9" fill="none"/>
<rect x="306.00" y="23.80" width="8.40" height="7.80" fill="#f7f7f7" stroke="#cfcfcf" stroke-width="0.5"/>
<path d="M311.4,27.6 L311.4,32.4 L312.6,31.3 L313.5,33 L314.2,32.6 L313.4,31 L315,30.9 Z" fill="#fff" stroke="#888" stroke-width="0.4"/>
<rect x="1.50" y="42.00" width="86.30" height="5.70" fill="#ebebeb" />
<circle cx="4.4" cy="44.8" r="0.9" fill="#555"/>
<text x="7.6" y="45.9" font-size="3.00" fill="#777" text-anchor="start" font-weight="normal" textLength="16.6" lengthAdjust="spacingAndGlyphs" >BROWSER</text>
<circle cx="83" cy="44.8" r="1.1" fill="#333"/>
<path d="M9.3,51.5 L9.3,54.3 L6.5,54.3 Z" fill="#444"/>
<path d="M12.0,53.0 Q14.3,50.4 16.6,53.0 Q14.3,55.6 12.0,53.0 Z" fill="#adadad"/><circle cx="14.3" cy="53.0" r="0.8" fill="#7a7a7a"/>
<path d="M19.9,50.8 H22.2 L23.4,52.0 V55.2 H19.9 Z" fill="#f4f4f4" stroke="#b5b5b5" stroke-width="0.4"/>
<rect x="25.50" y="50.40" width="62.20" height="5.20" fill="#f1f1f1" rx="0.5"/>
<text x="27.7" y="54.0" font-size="3.00" fill="#6c6c6c" text-anchor="start" font-weight="normal" textLength="57.8" lengthAdjust="spacingAndGlyphs" >lp_drones_lora_board_pcb_outline_desi...</text>
<path d="M11.5,58.4 L13.5,60.0 L11.5,61.6 Z" fill="#fdfdfd" stroke="#8a8a8a" stroke-width="0.45"/>
<rect x="17.80" y="58.10" width="1.10" height="3.80" fill="#666" /><rect x="19.70" y="58.10" width="1.10" height="3.80" fill="#666" />
<rect x="23.00" y="57.40" width="31.70" height="5.20" fill="#f1f1f1" rx="0.5"/>
<text x="25.2" y="61.0" font-size="3.00" fill="#6c6c6c" text-anchor="start" font-weight="normal" textLength="27.3" lengthAdjust="spacingAndGlyphs" >Document Settings</text>
<path d="M11.5,65.2 L13.5,66.8 L11.5,68.4 Z" fill="#fdfdfd" stroke="#8a8a8a" stroke-width="0.45"/>
<rect x="17.60" y="65.20" width="4.60" height="3.40" fill="#808080" /><rect x="17.60" y="64.70" width="2.00" height="0.70" fill="#808080" /><rect x="19.70" y="65.20" width="0.40" height="3.40" fill="#b0b0b0" />
<rect x="24.30" y="64.20" width="23.60" height="5.20" fill="#f1f1f1" rx="0.5"/>
<text x="26.5" y="67.8" font-size="3.00" fill="#6c6c6c" text-anchor="start" font-weight="normal" textLength="19.2" lengthAdjust="spacingAndGlyphs" >Named Views</text>
<path d="M11.5,72.1 L13.5,73.7 L11.5,75.3 Z" fill="#fdfdfd" stroke="#8a8a8a" stroke-width="0.45"/>
<path d="M17.5,73.7 Q19.9,70.9 22.3,73.7 Q19.9,76.5 17.5,73.7 Z" fill="#dedede"/>
<rect x="24.70" y="72.10" width="4.60" height="3.40" fill="#808080" /><rect x="24.70" y="71.60" width="2.00" height="0.70" fill="#808080" /><rect x="26.80" y="72.10" width="0.40" height="3.40" fill="#b0b0b0" />
<rect x="31.00" y="71.10" width="13.80" height="5.20" fill="#f1f1f1" rx="0.5"/>
<text x="33.2" y="74.8" font-size="3.00" fill="#6c6c6c" text-anchor="start" font-weight="normal" textLength="9.4" lengthAdjust="spacingAndGlyphs" >Origin</text>
<path d="M13.7,79.1 L13.7,81.9 L10.9,81.9 Z" fill="#444"/>
<path d="M17.9,80.6 Q20.2,78.0 22.5,80.6 Q20.2,83.2 17.9,80.6 Z" fill="#adadad"/><circle cx="20.2" cy="80.6" r="0.8" fill="#7a7a7a"/>
<rect x="24.30" y="77.90" width="32.90" height="5.50" fill="#5c5c5c" />
<rect x="25.10" y="78.70" width="3.00" height="3.80" fill="#e8e8e8" />
<rect x="25.70" y="80.40" width="2.40" height="2.10" fill="#5c5c5c" />
<text x="29.9" y="81.7" font-size="3.10" fill="#fff" text-anchor="start" font-weight="bold" textLength="24.9" lengthAdjust="spacingAndGlyphs" >lp_50x_pcb:1</text>
<rect x="58.50" y="78.90" width="3.20" height="3.40" fill="#d4d4d4" stroke="#b8b8b8" stroke-width="0.3"/>
<path d="M17.1,86.0 L19.1,87.6 L17.1,89.2 Z" fill="#fdfdfd" stroke="#8a8a8a" stroke-width="0.45"/>
<path d="M23.4,87.6 Q25.8,84.8 28.2,87.6 Q25.8,90.4 23.4,87.6 Z" fill="#dedede"/>
<rect x="30.40" y="86.00" width="4.60" height="3.40" fill="#808080" /><rect x="30.40" y="85.50" width="2.00" height="0.70" fill="#808080" /><rect x="32.50" y="86.00" width="0.40" height="3.40" fill="#b0b0b0" />
<rect x="36.70" y="85.00" width="13.10" height="5.20" fill="#f1f1f1" rx="0.5"/>
<text x="38.9" y="88.6" font-size="3.00" fill="#6c6c6c" text-anchor="start" font-weight="normal" textLength="8.7" lengthAdjust="spacingAndGlyphs" >Origin</text>
<path d="M19.3,93.0 L19.3,95.8 L16.5,95.8 Z" fill="#444"/>
<path d="M23.3,94.5 Q25.6,91.9 27.9,94.5 Q25.6,97.1 23.3,94.5 Z" fill="#adadad"/><circle cx="25.6" cy="94.5" r="0.8" fill="#7a7a7a"/>
<rect x="30.40" y="92.90" width="4.60" height="3.40" fill="#808080" /><rect x="30.40" y="92.40" width="2.00" height="0.70" fill="#808080" /><rect x="32.50" y="92.90" width="0.40" height="3.40" fill="#b0b0b0" />
<rect x="36.70" y="91.90" width="14.30" height="5.20" fill="#f1f1f1" rx="0.5"/>
<text x="38.9" y="95.5" font-size="3.00" fill="#6c6c6c" text-anchor="start" font-weight="normal" textLength="9.9" lengthAdjust="spacingAndGlyphs" >Bodies</text>
<path d="M22.1,99.8 L24.1,101.4 L22.1,103.0 Z" fill="#fdfdfd" stroke="#8a8a8a" stroke-width="0.45"/>
<path d="M27.6,101.4 Q30.0,98.6 32.4,101.4 Q30.0,104.2 27.6,101.4 Z" fill="#dedede"/>
<rect x="35.20" y="99.80" width="4.60" height="3.40" fill="#808080" /><rect x="35.20" y="99.30" width="2.00" height="0.70" fill="#808080" /><rect x="37.30" y="99.80" width="0.40" height="3.40" fill="#b0b0b0" />
<rect x="41.60" y="98.80" width="22.00" height="5.20" fill="#f1f1f1" rx="0.5"/>
<text x="43.8" y="102.5" font-size="3.00" fill="#6c6c6c" text-anchor="start" font-weight="normal" textLength="17.6" lengthAdjust="spacingAndGlyphs" >pcb_FCu (17)</text>
<path d="M22.1,106.7 L24.1,108.3 L22.1,109.9 Z" fill="#fdfdfd" stroke="#8a8a8a" stroke-width="0.45"/>
<path d="M27.6,108.3 Q30.0,105.5 32.4,108.3 Q30.0,111.1 27.6,108.3 Z" fill="#dedede"/>
<rect x="35.20" y="106.70" width="4.60" height="3.40" fill="#808080" /><rect x="35.20" y="106.20" width="2.00" height="0.70" fill="#808080" /><rect x="37.30" y="106.70" width="0.40" height="3.40" fill="#b0b0b0" />
<rect x="41.60" y="105.70" width="27.00" height="5.20" fill="#f1f1f1" rx="0.5"/>
<text x="43.8" y="109.3" font-size="3.00" fill="#6c6c6c" text-anchor="start" font-weight="normal" textLength="22.6" lengthAdjust="spacingAndGlyphs" >pcb_Eurdrift (6)</text>
<path d="M22.1,113.8 L24.1,115.4 L22.1,117.0 Z" fill="#fdfdfd" stroke="#8a8a8a" stroke-width="0.45"/>
<path d="M27.7,115.4 Q30.0,112.8 32.3,115.4 Q30.0,118.0 27.7,115.4 Z" fill="#adadad"/><circle cx="30.0" cy="115.4" r="0.8" fill="#7a7a7a"/>
<rect x="35.20" y="113.80" width="4.60" height="3.40" fill="#808080" /><rect x="35.20" y="113.30" width="2.00" height="0.70" fill="#808080" /><rect x="37.30" y="113.80" width="0.40" height="3.40" fill="#b0b0b0" />
<rect x="41.60" y="112.80" width="23.00" height="5.20" fill="#f1f1f1" rx="0.5"/>
<text x="43.8" y="116.5" font-size="3.00" fill="#6c6c6c" text-anchor="start" font-weight="normal" textLength="18.6" lengthAdjust="spacingAndGlyphs" >pcb_crest (4)</text>
<path d="M27.7,122.3 Q30.0,119.7 32.3,122.3 Q30.0,124.9 27.7,122.3 Z" fill="#adadad"/><circle cx="30.0" cy="122.3" r="0.8" fill="#7a7a7a"/>
<rect x="35.60" y="120.10" width="3.80" height="4.40" fill="#fdfdfd" stroke="#777" stroke-width="0.45"/>
<rect x="41.60" y="119.70" width="17.40" height="5.20" fill="#f1f1f1" rx="0.5"/>
<text x="43.8" y="123.3" font-size="3.00" fill="#6c6c6c" text-anchor="start" font-weight="normal" textLength="13.0" lengthAdjust="spacingAndGlyphs" >pcb_main</text>
<path d="M19.3,127.8 L19.3,130.6 L16.5,130.6 Z" fill="#444"/>
<path d="M23.3,129.3 Q25.6,126.7 27.9,129.3 Q25.6,131.9 23.3,129.3 Z" fill="#adadad"/><circle cx="25.6" cy="129.3" r="0.8" fill="#7a7a7a"/>
<rect x="30.40" y="127.70" width="4.60" height="3.40" fill="#808080" /><rect x="30.40" y="127.20" width="2.00" height="0.70" fill="#808080" /><rect x="32.50" y="127.70" width="0.40" height="3.40" fill="#b0b0b0" />
<rect x="36.70" y="126.70" width="17.30" height="5.20" fill="#f1f1f1" rx="0.5"/>
<text x="38.9" y="130.4" font-size="3.00" fill="#6c6c6c" text-anchor="start" font-weight="normal" textLength="12.9" lengthAdjust="spacingAndGlyphs" >Sketches</text>
<path d="M27.6,136.2 Q30.0,133.4 32.4,136.2 Q30.0,139.0 27.6,136.2 Z" fill="#dedede"/>
<rect x="35.60" y="134.10" width="3.80" height="4.20" fill="#fff" stroke="#c98a80" stroke-width="0.45"/>
<rect x="41.60" y="133.60" width="30.40" height="5.20" fill="#f1f1f1" rx="0.5"/>
<text x="43.8" y="137.2" font-size="3.00" fill="#6c6c6c" text-anchor="start" font-weight="normal" textLength="26.0" lengthAdjust="spacingAndGlyphs" >main_design_lines</text>
<path d="M27.6,143.0 Q30.0,140.2 32.4,143.0 Q30.0,145.8 27.6,143.0 Z" fill="#dedede"/>
<rect x="35.60" y="140.90" width="3.80" height="4.20" fill="#fff" stroke="#999" stroke-width="0.45"/><rect x="37.80" y="143.40" width="1.90" height="2.10" fill="#d03a2e" />
<rect x="41.60" y="140.40" width="20.40" height="5.20" fill="#f1f1f1" rx="0.5"/>
<text x="43.8" y="144.1" font-size="3.00" fill="#6c6c6c" text-anchor="start" font-weight="normal" textLength="16.0" lengthAdjust="spacingAndGlyphs" >pcb_outline</text>
<path d="M27.6,149.9 Q30.0,147.1 32.4,149.9 Q30.0,152.7 27.6,149.9 Z" fill="#dedede"/>
<rect x="35.60" y="147.80" width="3.80" height="4.20" fill="#fff" stroke="#999" stroke-width="0.45"/><rect x="37.80" y="150.30" width="1.90" height="2.10" fill="#d03a2e" />
<rect x="41.60" y="147.30" width="22.40" height="5.20" fill="#f1f1f1" rx="0.5"/>
<text x="43.8" y="151.0" font-size="3.00" fill="#6c6c6c" text-anchor="start" font-weight="normal" textLength="18.0" lengthAdjust="spacingAndGlyphs" >pcb_Eurdrift</text>
<path d="M27.6,156.8 Q30.0,154.0 32.4,156.8 Q30.0,159.6 27.6,156.8 Z" fill="#dedede"/>
<rect x="35.60" y="154.70" width="3.80" height="4.20" fill="#fff" stroke="#999" stroke-width="0.45"/><rect x="37.80" y="157.20" width="1.90" height="2.10" fill="#d03a2e" />
<rect x="41.60" y="154.20" width="16.40" height="5.20" fill="#f1f1f1" rx="0.5"/>
<text x="43.8" y="157.9" font-size="3.00" fill="#6c6c6c" text-anchor="start" font-weight="normal" textLength="12.0" lengthAdjust="spacingAndGlyphs" >pcb_FCu</text>
<path d="M27.6,163.7 Q30.0,160.9 32.4,163.7 Q30.0,166.5 27.6,163.7 Z" fill="#dedede"/>
<rect x="35.60" y="161.60" width="3.80" height="4.20" fill="#fff" stroke="#999" stroke-width="0.45"/><rect x="37.80" y="164.10" width="1.90" height="2.10" fill="#d03a2e" />
<rect x="41.60" y="161.10" width="30.40" height="5.20" fill="#f1f1f1" rx="0.5"/>
<text x="43.8" y="164.8" font-size="3.00" fill="#6c6c6c" text-anchor="start" font-weight="normal" textLength="26.0" lengthAdjust="spacingAndGlyphs" >pcb_crest_dinosar</text>
<path d="M27.6,170.6 Q30.0,167.8 32.4,170.6 Q30.0,173.4 27.6,170.6 Z" fill="#dedede"/>
<rect x="35.60" y="168.50" width="3.80" height="4.20" fill="#fff" stroke="#c98a80" stroke-width="0.45"/>
<rect x="41.60" y="168.00" width="24.40" height="5.20" fill="#f1f1f1" rx="0.5"/>
<text x="43.8" y="171.7" font-size="3.00" fill="#6c6c6c" text-anchor="start" font-weight="normal" textLength="20.0" lengthAdjust="spacingAndGlyphs" >dimension_fix</text>
<path d="M11.5,176.2 L13.5,177.8 L11.5,179.4 Z" fill="#fdfdfd" stroke="#8a8a8a" stroke-width="0.45"/>
<path d="M17.6,177.8 Q19.9,175.2 22.2,177.8 Q19.9,180.4 17.6,177.8 Z" fill="#adadad"/><circle cx="19.9" cy="177.8" r="0.8" fill="#7a7a7a"/>
<rect x="24.60" y="175.80" width="4.00" height="4.00" fill="#4f86c6" /><rect x="24.60" y="175.80" width="4.00" height="1.10" fill="#9cc0e8" /><rect x="24.60" y="175.80" width="1.20" height="4.00" fill="#dfe9f4" />
<rect x="31.00" y="175.20" width="45.00" height="5.20" fill="#f1f1f1" rx="0.5"/>
<text x="33.2" y="178.9" font-size="3.00" fill="#6c6c6c" text-anchor="start" font-weight="normal" textLength="40.6" lengthAdjust="spacingAndGlyphs" >lamp_shape_rigid_flex_pcb:1</text>
<rect x="1.50" y="379.30" width="86.20" height="5.90" fill="#efefef" />
<circle cx="4.4" cy="382.3" r="0.6" fill="#888"/>
<text x="8.0" y="383.4" font-size="3.00" fill="#666" text-anchor="start" font-weight="normal" textLength="18.4" lengthAdjust="spacingAndGlyphs" >COMMENTS</text>
<circle cx="83" cy="382.4" r="1.1" fill="#333"/>
<rect x="3.20" y="393.00" width="0.60" height="3.20" fill="#555" />
<path d="M6.6,393.0 L4,394.6 L6.6,396.2 Z" fill="#555"/>
<path d="M13.4,393.0 L10.6,394.6 L13.4,396.2 Z" fill="#555"/>
<path d="M17.6,392.4 L21,394.6 L17.6,396.8 Z" fill="#111"/>
<path d="M24.8,393.0 L27.4,394.6 L24.8,396.2 Z" fill="#555"/>
<rect x="27.60" y="393.00" width="0.60" height="3.20" fill="#555" />
<path d="M32.2,393.0 L34.8,394.6 L32.2,396.2 Z" fill="#555"/>
<rect x="35.00" y="393.00" width="0.60" height="3.20" fill="#555" />
<rect x="31.20" y="394.30" width="1.20" height="0.60" fill="#555" />
<rect x="41.80" y="392.20" width="4.40" height="4.80" fill="#e4e4e4" stroke="#c4c4c4" stroke-width="0.4"/>
<rect x="48.80" y="392.20" width="4.40" height="4.80" fill="#3b8fe0" />
<rect x="48.80" y="392.20" width="4.40" height="1.20" fill="#7db8ee" />
<rect x="48.80" y="396.00" width="4.40" height="1.00" fill="#2a6fc0" />
<rect x="55.80" y="392.20" width="4.40" height="4.80" fill="#e4e4e4" stroke="#c4c4c4" stroke-width="0.4"/>
<rect x="62.80" y="392.20" width="4.40" height="4.80" fill="#3b8fe0" />
<rect x="62.80" y="392.20" width="4.40" height="1.20" fill="#7db8ee" />
<rect x="62.80" y="396.00" width="4.40" height="1.00" fill="#2a6fc0" />
<rect x="69.80" y="392.20" width="4.40" height="4.80" fill="#e4e4e4" stroke="#c4c4c4" stroke-width="0.4"/>
<rect x="76.80" y="392.20" width="4.40" height="4.80" fill="#3b8fe0" />
<rect x="76.80" y="392.20" width="4.40" height="1.20" fill="#7db8ee" />
<rect x="76.80" y="396.00" width="4.40" height="1.00" fill="#2a6fc0" />
<rect x="83.80" y="392.20" width="4.40" height="4.80" fill="#f6f6f6" stroke="#d0d0d0" stroke-width="0.4"/>
<rect x="90.30" y="392.20" width="4.40" height="4.80" fill="#3b8fe0" />
<rect x="90.30" y="392.20" width="4.40" height="1.20" fill="#7db8ee" />
<rect x="90.30" y="396.00" width="4.40" height="1.00" fill="#2a6fc0" />
<rect x="97.30" y="392.20" width="4.40" height="4.80" fill="#3b8fe0" />
<rect x="97.30" y="392.20" width="4.40" height="1.20" fill="#7db8ee" />
<rect x="97.30" y="396.00" width="4.40" height="1.00" fill="#2a6fc0" />
<path d="M104.1,396.8 L106.1,392.2 L108.9,392.2 L107.1,396.8 Z" fill="#3b8fe0"/>
<rect x="111.30" y="392.20" width="4.40" height="4.80" fill="#3b8fe0" />
<rect x="111.30" y="392.20" width="4.40" height="1.20" fill="#7db8ee" />
<rect x="111.30" y="396.00" width="4.40" height="1.00" fill="#2a6fc0" />
<rect x="118.30" y="392.20" width="4.40" height="4.80" fill="#3b8fe0" />
<rect x="118.30" y="392.20" width="4.40" height="1.20" fill="#7db8ee" />
<rect x="118.30" y="396.00" width="4.40" height="1.00" fill="#2a6fc0" />
<rect x="124.80" y="392.20" width="4.40" height="4.80" fill="#e4e4e4" stroke="#c4c4c4" stroke-width="0.4"/>
<rect x="132.30" y="392.20" width="4.40" height="4.80" fill="#3b8fe0" />
<rect x="132.30" y="392.20" width="4.40" height="1.20" fill="#7db8ee" />
<rect x="132.30" y="396.00" width="4.40" height="1.00" fill="#2a6fc0" />
<rect x="139.30" y="392.20" width="4.40" height="4.80" fill="#a9cdf0" />
<rect x="139.30" y="392.20" width="4.40" height="1.20" fill="#c9e0f6" />
<rect x="146.30" y="392.20" width="4.40" height="4.80" fill="#a9cdf0" />
<rect x="146.30" y="392.20" width="4.40" height="1.20" fill="#c9e0f6" />
<path d="M152.9,396.8 L154.9,392.2 L157.7,392.2 L155.9,396.8 Z" fill="#3b8fe0"/>
<path d="M160.7,393.0 L162.9,394.2 L164.1,396.6" fill="none" stroke="#b0b0b0" stroke-width="0.9"/>
<rect x="160.50" y="392.40" width="2.00" height="2.00" fill="#c6c6c6" />
<path d="M167.1,394.6 H171.9 M169.5,392.2 V397.0" stroke="#6e6e6e" stroke-width="0.9"/>
<path d="M174.7,393.0 L176.9,394.2 L178.1,396.6" fill="none" stroke="#b0b0b0" stroke-width="0.9"/>
<rect x="174.50" y="392.40" width="2.00" height="2.00" fill="#c6c6c6" />
<path d="M180.9,394.6 H185.7 M183.3,392.2 V397.0" stroke="#6e6e6e" stroke-width="0.9"/>
<path d="M188.4,393.0 L190.6,394.2 L191.8,396.6" fill="none" stroke="#b0b0b0" stroke-width="0.9"/>
<rect x="188.20" y="392.40" width="2.00" height="2.00" fill="#c6c6c6" />
<path d="M194.6,394.6 H199.4 M197.0,392.2 V397.0" stroke="#6e6e6e" stroke-width="0.9"/>
<path d="M202.2,393.0 L204.4,394.2 L205.6,396.6" fill="none" stroke="#b0b0b0" stroke-width="0.9"/>
<rect x="202.00" y="392.40" width="2.00" height="2.00" fill="#c6c6c6" />
<path d="M208.6,394.6 H213.4 M211.0,392.2 V397.0" stroke="#6e6e6e" stroke-width="0.9"/>
<rect x="215.80" y="392.20" width="4.40" height="4.80" fill="#f6f6f6" stroke="#d0d0d0" stroke-width="0.4"/>
<rect x="222.40" y="392.20" width="4.40" height="4.80" fill="#3b8fe0" />
<rect x="222.40" y="392.20" width="4.40" height="1.20" fill="#7db8ee" />
<rect x="222.40" y="396.00" width="4.40" height="1.00" fill="#2a6fc0" />
<path d="M42,399.2 H228" stroke="#c9c9c9" stroke-width="0.4" stroke-dasharray="0.8 0.8"/>
<rect x="228.30" y="391.00" width="0.70" height="8.40" fill="#222" />
<path d="M226.8,390.4 H230.4 V391.8 L228.6,393 L226.8,391.8 Z" fill="#111"/>
<rect x="336.20" y="378.50" width="68.00" height="7.40" fill="#f5f5f5" />
<circle cx="339.4" cy="382.4" r="1.5" fill="none" stroke="#8a8a8a" stroke-width="0.6"/><path d="M338,383.4 L341,381.2" stroke="#8a8a8a" stroke-width="0.5"/>
<path d="M342.6,382 L343.8,382 L343.2,382.8 Z" fill="#777"/>
<rect x="346.40" y="380.40" width="4.20" height="3.80" fill="#cfcfcf" stroke="#b5b5b5" stroke-width="0.3"/>
<rect x="353.00" y="378.50" width="7.00" height="7.20" fill="#2b7bd0" />
<path d="M355.2,384 V381.2 Q355.2,380.4 356,380.6 L356,380 Q356.6,379.4 357.2,380 Q357.8,379.6 358.2,380.4 L358.4,383 Q358,384.4 356.6,384.4 Z" fill="#fff"/>
<circle cx="363.8" cy="381.8" r="1.3" fill="none" stroke="#777" stroke-width="0.5"/><path d="M364.8,382.8 L366,384.2" stroke="#777" stroke-width="0.6"/>
<rect x="368.80" y="380.40" width="3.20" height="3.20" fill="none" stroke="#666" stroke-width="0.5"/>
<path d="M371.6,383 L373,384.6" stroke="#555" stroke-width="0.6"/>
<path d="M374.6,382 L375.8,382 L375.2,382.8 Z" fill="#777"/>
<rect x="378.40" y="380.20" width="4.40" height="4.00" fill="#bdbdbd" stroke="#9d9d9d" stroke-width="0.3"/>
<path d="M384,382 L385.2,382 L384.6,382.8 Z" fill="#777"/>
<rect x="387.40" y="380.20" width="4.40" height="4.00" fill="#c9c9c9" stroke="#a9a9a9" stroke-width="0.3"/>
<rect x="387.40" y="382.00" width="4.40" height="0.30" fill="#999" />
<rect x="389.50" y="380.20" width="0.30" height="4.00" fill="#999" />
<path d="M393.4,382 L394.6,382 L394,382.8 Z" fill="#777"/>
<rect x="396.40" y="380.20" width="4.40" height="4.00" fill="#a9bcd8" stroke="#8ea3c4" stroke-width="0.3"/>
<rect x="396.40" y="382.00" width="4.40" height="0.30" fill="#7d93b8" />
<rect x="398.50" y="380.20" width="0.30" height="4.00" fill="#7d93b8" />
<path d="M402.4,382 L403.6,382 L403,382.8 Z" fill="#777"/>
<path d="M720,47 L731.6,52.6 L723.6,57.6 L712.2,51.6 Z" fill="#f0f0f0" stroke="#e0e0e0" stroke-width="0.3"/>
<path d="M712.2,51.6 L723.6,57.6 L724,70 L713,63.6 Z" fill="#f5f5f5" stroke="#e0e0e0" stroke-width="0.3"/>
<path d="M723.6,57.6 L731.6,52.6 L731.8,64 L724,70 Z" fill="#e6e6e6" stroke="#dadada" stroke-width="0.3"/>
<text x="722.0" y="53.4" font-size="2.20" fill="#bbb" text-anchor="middle" font-weight="normal" >TOP</text>
<path d="M711.2,49.6 L712.2,64.6" stroke="#a9a9e6" stroke-width="0.7"/>
<path d="M712.2,64.6 L727.4,72.6" stroke="#efb3b3" stroke-width="0.7"/>
<path d="M712.2,64.6 L716,62" stroke="#bfe0bf" stroke-width="0.5"/>
</g>
</svg></body></html>
